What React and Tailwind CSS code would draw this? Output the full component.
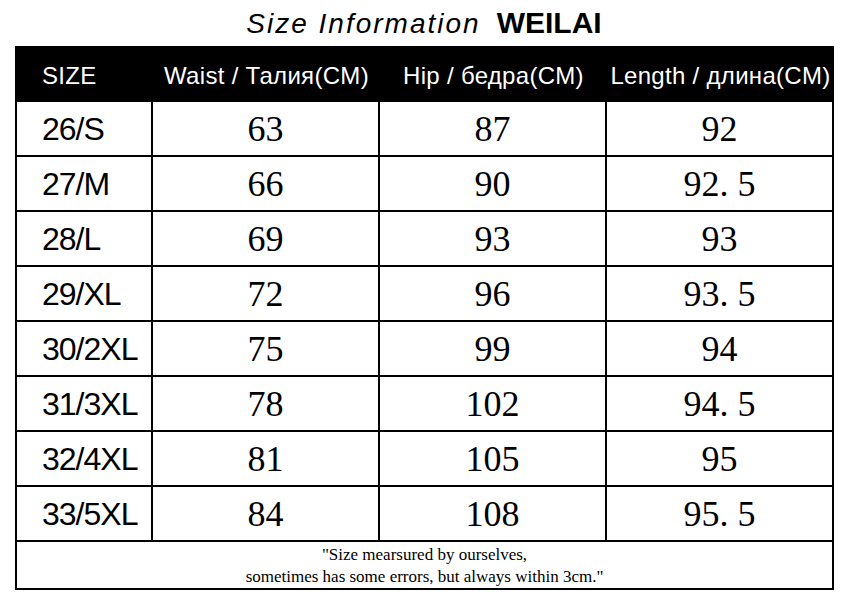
const ROWS = [
  ['26/S', '63', '87', '92'],
  ['27/M', '66', '90', '92. 5'],
  ['28/L', '69', '93', '93'],
  ['29/XL', '72', '96', '93. 5'],
  ['30/2XL', '75', '99', '94'],
  ['31/3XL', '78', '102', '94. 5'],
  ['32/4XL', '81', '105', '95'],
  ['33/5XL', '84', '108', '95. 5'],
]

const COLS = 'grid grid-cols-[138px_227px_227px_227px]'

export default function App() {
  return (
    <div className="w-[844px] h-[601px] bg-white text-black">
      {/* titre */}
      <div className="h-[46px] flex justify-center items-start pt-[8px] pl-[4px]">
        <div className="flex items-baseline leading-[30px]">
          <span className="italic text-[28px] tracking-[2px] font-['Liberation_Sans',sans-serif]">Size Information</span>
          <span className="ml-[16px] font-bold text-[30px] font-['Liberation_Sans',sans-serif]">WEILAI</span>
        </div>
      </div>

      <div className="ml-[15px] w-[819px]">
        {/* en-tête */}
        <div className={`${COLS} h-[56px] pt-[3px] bg-black text-white text-[24px] tracking-[0.3px] font-['Liberation_Sans',sans-serif]`}>
          <div className="flex items-center pl-[27px]">SIZE</div>
          <div className="flex items-center justify-center">Waist / Талия(CM)</div>
          <div className="flex items-center justify-center">Hip / бедра(CM)</div>
          <div className="flex items-center justify-center">Length / длина(CM)</div>
        </div>

        {ROWS.map(r => (
          <div key={r[0]} className={`${COLS} h-[55px] border-b-2 border-black`}>
            <div className="flex items-center pl-[25px] border-l-2 border-r-2 border-black text-[32px] tracking-[-1px] leading-none font-['Liberation_Sans',sans-serif]">{r[0]}</div>
            {r.slice(1).map((v, i) => (
              <div key={i} className="flex items-center justify-center border-r-2 border-black text-[36px] leading-none font-['Liberation_Serif',serif]">{v}</div>
            ))}
          </div>
        ))}

        <div className="h-[48px] border-l-2 border-r-2 border-b-2 border-black pt-[2px] text-center text-[17px] leading-[22px] font-['Liberation_Serif',serif]">
          <div>"Size mearsured by ourselves,</div>
          <div>sometimes has some errors, but always within 3cm."</div>
        </div>
      </div>
    </div>
  )
}
